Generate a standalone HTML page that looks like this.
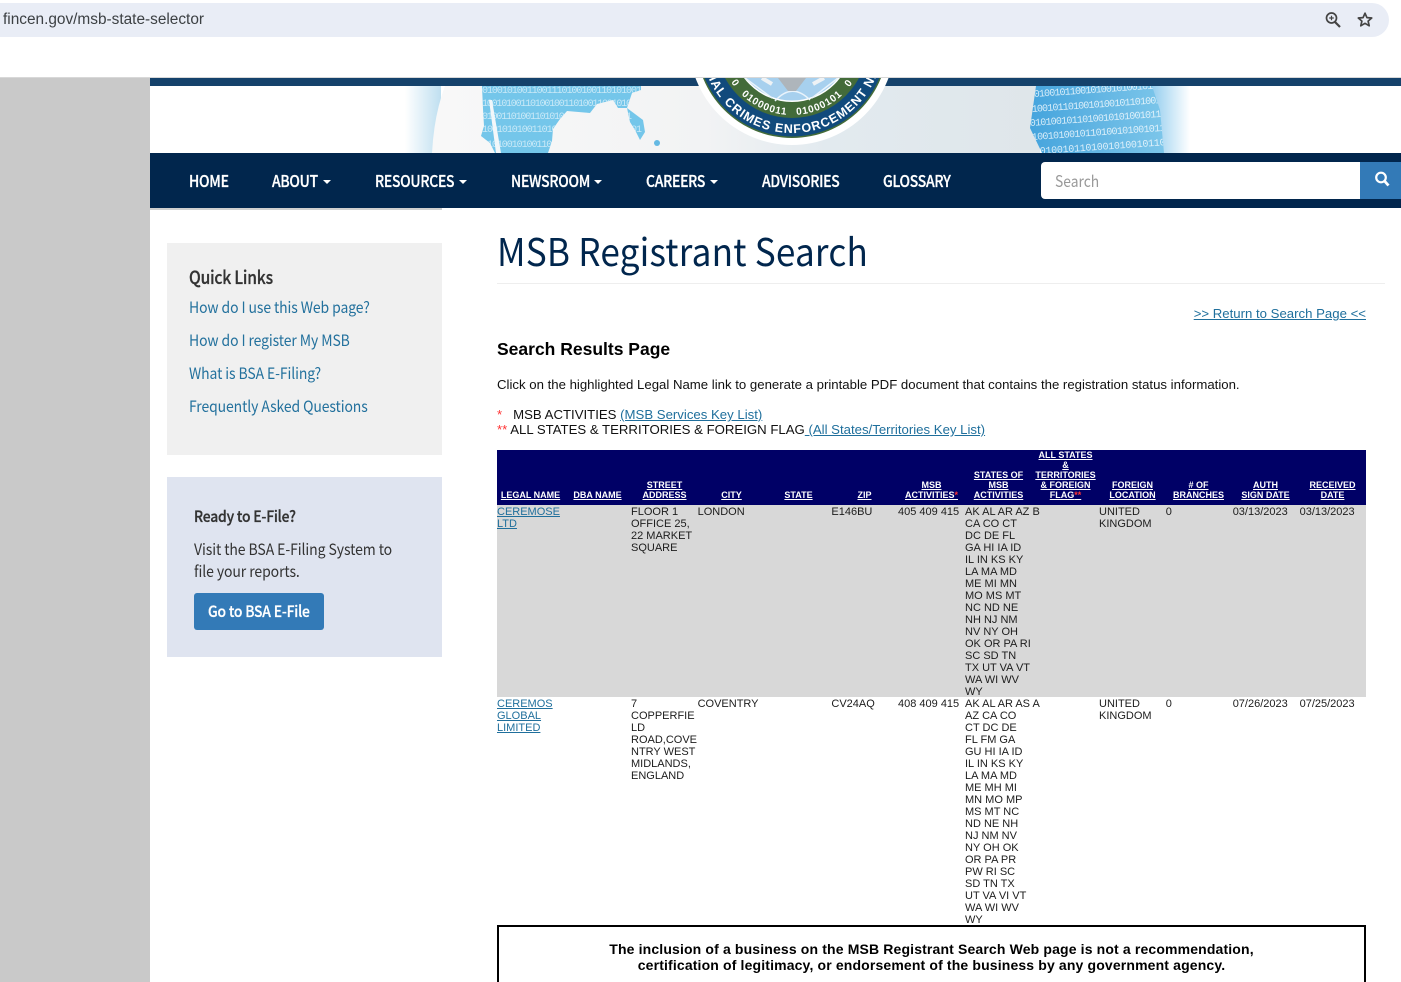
<!DOCTYPE html>
<html><head><meta charset="utf-8"><title>MSB Registrant Search</title>
<style>
html,body{margin:0;padding:0;background:#fff}
#p{position:relative;width:1401px;height:982px;overflow:hidden;background:#fff;font-family:"Liberation Sans",Arial,sans-serif}
.t,.c,.h{position:absolute;white-space:nowrap}
.s{font-family:"Noto Sans CJK JP","Liberation Sans",sans-serif;transform-origin:0 50%}
a{color:#1f6f9c;text-decoration:underline}
.n{top:169px;line-height:22px;color:#fff;font-size:16px;font-weight:500;letter-spacing:-.3px;transform:scaleX(.87);-webkit-text-stroke:.3px #fff}
.car{position:absolute;top:180px;width:0;height:0;border-left:4px solid transparent;border-right:4px solid transparent;border-top:4px solid #fff}
.ql{left:189px;line-height:22px;color:#23719d;font-size:15.5px;letter-spacing:-.1px;transform:scaleX(.9)}
.c{font-size:11px;line-height:12px;color:#1c1c1c}
.h{font-size:9px;line-height:10px;font-weight:bold;color:#fff;text-align:center;width:67px;text-decoration:underline;bottom:482px}
.h i{color:#f33;font-style:normal}
</style></head><body><div id="p">

<div style="position:absolute;left:0;top:3px;width:1389px;height:34px;background:#e9edf6;border-radius:0 17px 17px 0"></div>
<div class="t" style="left:3px;top:10px;line-height:20px;font-size:15.4px;color:#3c4043">fincen.gov/msb-state-selector</div>
<svg style="position:absolute;left:1324px;top:10px" width="52" height="20" viewBox="0 0 52 20" fill="none" stroke="#444"><circle cx="7.5" cy="8" r="5" stroke-width="1.7"/><path d="M11 12l5 5" stroke-width="2.2"/><path d="M5.2 8h4.6M7.5 5.7v4.6" stroke-width="1.2"/><path d="M41 3.2l1.9 4.4 4.8.4-3.6 3.1 1.1 4.7-4.2-2.5-4.2 2.5 1.1-4.7-3.6-3.1 4.8-.4z" stroke-width="1.7" stroke-linejoin="round"/></svg>

<div style="position:absolute;left:0;top:77px;width:1401px;height:1px;background:#d8d8d8"></div>
<div style="position:absolute;left:0;top:78px;width:150px;height:904px;background:#c9c9c9"></div>

<svg style="position:absolute;left:150px;top:78px" width="1251" height="75" viewBox="150 78 1251 75">
<defs>
<linearGradient id="gl" x1="0" x2="1" y1="0" y2="0"><stop offset="0" stop-color="#fff"/><stop offset="1" stop-color="#bfdff0"/></linearGradient>
<linearGradient id="gr" x1="0" x2="1" y1="0" y2="0"><stop offset="0" stop-color="#8fcbee"/><stop offset="1" stop-color="#fff"/></linearGradient>
<linearGradient id="mid" x1="0" x2="1" y1="0" y2="0"><stop offset="0" stop-color="#f8f8f8"/><stop offset=".45" stop-color="#f2f3f4"/><stop offset=".65" stop-color="#e2eaef"/><stop offset="1" stop-color="#dfe6ea"/></linearGradient>
<linearGradient id="blu" x1="0" x2="1" y1="0" y2="0"><stop offset="0" stop-color="#45a4dd"/><stop offset=".5" stop-color="#62b5e3"/><stop offset="1" stop-color="#7cc6ea"/></linearGradient>
<path id="a1" d="M701 42a91 91 0 0 0 182 0"/>
<path id="a2" d="M719 42a73 73 0 0 0 146 0"/>
<clipPath id="cl"><path d="M482 86L641 86L641 90L632 93L627 108L643 120L645 132L640 140L635 130L630 122L627 108L618 108L613 100L597 104L590 113L567 111L560 119L553 129L552 141L548 153L495 153L490 143L481 136L484 126L483 109Z"/></clipPath>
<clipPath id="cr"><path d="M1036 86L1152 86L1160 110L1164 153L1042 153L1030 128L1034 100Z"/></clipPath>
</defs>
<rect x="150" y="78" width="1251" height="8" fill="#15426b"/>
<rect x="405" y="86" width="36" height="67" fill="url(#gl)"/>
<path d="M445 86L1040 86L1040 153L432 153Q434 115 445 86Z" fill="url(#mid)"/>
<path d="M482 86L641 86L641 90L632 93L627 108L643 120L645 132L640 140L635 130L630 122L627 108L618 108L613 100L597 104L590 113L567 111L560 119L553 129L552 141L548 153L495 153L490 143L481 136L484 126L483 109Z" fill="#74c6ea"/>
<path d="M489 100L492 100L501 153L496 153Z" fill="#f4f7f9"/>
<circle cx="657" cy="143" r="3" fill="#64b9e3"/>
<g clip-path="url(#cl)" font-family="Liberation Mono" font-size="10" fill="#eaf7fd" opacity=".72">
<text x="482" y="93" textLength="160">01001010011001110100100110101001</text>
<text x="482" y="106" textLength="150">1001010011010010011010011001010</text>
<text x="482" y="119" textLength="150">0100110100110101001001101001011</text>
<text x="482" y="132" textLength="160">10010101001101001010010101100101</text>
<text x="482" y="147" textLength="100">01010010100110100101</text>
</g>
<rect x="1150" y="86" width="40" height="67" fill="url(#gr)"/>
<path d="M1036 86L1152 86L1160 110L1164 153L1042 153L1030 128L1034 100Z" fill="url(#blu)"/>
<g clip-path="url(#cr)" font-family="Liberation Mono" font-size="10" fill="#f2fafe" opacity=".85">
<text x="1034" y="97" textLength="130" transform="rotate(-4 1034 97)">0100101100101001010010110</text>
<text x="1032" y="112" textLength="130" transform="rotate(-4 1032 112)">1001011010010100101101001</text>
<text x="1030" y="126" textLength="132" transform="rotate(-4 1030 126)">0101001011010010101001011</text>
<text x="1032" y="140" textLength="134" transform="rotate(-4 1032 140)">1001010010110100101001011</text>
<text x="1040" y="154" textLength="126" transform="rotate(-4 1040 154)">0100101101001010010110</text>
</g>
<circle cx="792" cy="42" r="103" fill="#fff"/>
<circle cx="792" cy="42" r="96" fill="#436b39"/>
<circle cx="792" cy="42" r="94.500" fill="#114a7c"/>
<circle cx="792" cy="42" r="76" fill="#436b39"/>
<circle cx="792" cy="42" r="60" fill="#fff"/>
<circle cx="792" cy="42" r="58.500" fill="#a7d0ee"/>
<path d="M745 78L772 98M838 78L812 98M775 101Q792 82 810 100" stroke="#e9f3fb" stroke-width="1.500" fill="none"/>
<path d="M778 78L788 91L796 91L806 78Z" fill="#aeb5bb"/>
<path d="M762 78L772 84M824 78L813 84" stroke="#eef2f5" stroke-width="4"/>
<g font-family="Liberation Sans" font-size="12.500" font-weight="bold" fill="#fff" letter-spacing="1">
<text><textPath href="#a1" startOffset="61" text-anchor="end">FINANCIAL</textPath></text>
<text><textPath href="#a1" startOffset="65.800">CRIMES ENFORCEMENT NETWORK</textPath></text>
</g>
<text font-family="Liberation Sans" font-size="10" font-weight="bold" fill="#fff" letter-spacing=".85" word-spacing="6"><textPath href="#a2" startOffset="50%" text-anchor="middle">0 01000011 01000101 0</textPath></text>
</svg>

<div style="position:absolute;left:150px;top:153px;width:1251px;height:55px;background:#01264d"></div>
<div style="position:absolute;left:150px;top:208px;width:292px;height:2px;background:#cfcfcf"></div>
<div class="t n s" style="left:189px">HOME</div>
<div class="t n s" style="left:272px">ABOUT</div><div class="car" style="left:323px"></div>
<div class="t n s" style="left:375px">RESOURCES</div><div class="car" style="left:459px"></div>
<div class="t n s" style="left:511px">NEWSROOM</div><div class="car" style="left:594px"></div>
<div class="t n s" style="left:646px">CAREERS</div><div class="car" style="left:710px"></div>
<div class="t n s" style="left:762px">ADVISORIES</div>
<div class="t n s" style="left:883px">GLOSSARY</div>
<div style="position:absolute;left:1041px;top:162px;width:320px;height:37px;background:#fff;border-radius:4px 0 0 4px"></div>
<div class="t s" style="left:1055px;top:169px;line-height:22px;font-size:16px;color:#999;transform:scaleX(.865)">Search</div>
<div style="position:absolute;left:1360px;top:162px;width:41px;height:37px;background:#337ab7"></div>
<svg style="position:absolute;left:1373px;top:170px" width="18" height="18" viewBox="0 0 18 18" fill="none" stroke="#fff"><circle cx="8" cy="7.500" r="4.800" stroke-width="2.200"/><path d="M11.500 11l4 4.500" stroke-width="2.800"/></svg>

<div style="position:absolute;left:167px;top:243px;width:275px;height:212px;background:#f0f0f0"></div>
<div class="t s" style="left:189px;top:265px;line-height:24px;font-size:18px;font-weight:500;color:#333;letter-spacing:-.2px;transform:scaleX(.866);-webkit-text-stroke:.3px #333">Quick Links</div>
<div class="t ql s" style="top:296px">How do I use this Web page?</div>
<div class="t ql s" style="top:329px">How do I register My MSB</div>
<div class="t ql s" style="top:362px">What is BSA E-Filing?</div>
<div class="t ql s" style="top:395px">Frequently Asked Questions</div>

<div style="position:absolute;left:167px;top:477px;width:275px;height:180px;background:#dfe4f0"></div>
<div class="t s" style="left:194px;top:505px;line-height:22px;font-size:15.500px;font-weight:500;color:#333;letter-spacing:-.2px;transform:scaleX(.895);-webkit-text-stroke:.3px #333">Ready to E-File?</div>
<div class="t s" style="left:194px;top:538px;line-height:22px;font-size:15.500px;color:#333;letter-spacing:-.1px;transform:scaleX(.904)">Visit the BSA E-Filing System to<br>file your reports.</div>
<div style="position:absolute;left:194px;top:593px;width:130px;height:37px;background:#337ab7;border-radius:3px"></div>
<div class="t s" style="left:208px;top:600px;line-height:22px;font-size:15.500px;font-weight:500;color:#fff;letter-spacing:-.2px;transform:scaleX(.895);-webkit-text-stroke:.25px #fff">Go to BSA E-File</div>

<div class="t s" style="left:497px;top:222px;line-height:56px;font-size:38px;color:#01264d;letter-spacing:.2px;transform:scaleX(.925)">MSB Registrant Search</div>
<div style="position:absolute;left:497px;top:283px;width:888px;height:1px;background:#eee"></div>
<div class="t" style="right:35px;top:306px;line-height:15px;font-size:13.200px"><a>&gt;&gt; Return to Search Page &lt;&lt;</a></div>
<div class="t" style="left:497px;top:338px;line-height:22px;font-size:17.500px;font-weight:bold;color:#000">Search Results Page</div>
<div class="t" style="left:497px;top:377px;line-height:15px;font-size:13.200px;color:#111">Click on the highlighted Legal Name link to generate a printable PDF document that contains the registration status information.</div>
<div class="t" style="left:497px;top:407px;line-height:15px;font-size:13.200px;color:#111"><span style="color:#f33">*</span><span style="margin-left:11px">MSB ACTIVITIES</span> <a>(MSB Services Key List)</a></div>
<div class="t" style="left:497px;top:422px;line-height:15px;font-size:13.200px;color:#111"><span style="color:#f33">**</span> ALL STATES &amp; TERRITORIES &amp; FOREIGN FLAG<a> (All States/Territories Key List)</a></div>

<div style="position:absolute;left:497px;top:450px;width:869px;height:55px;background:#006"></div>
<div style="position:absolute;left:497px;top:505px;width:869px;height:192px;background:#d8d8d8"></div>

<div class="h" style="left:497px">LEGAL NAME</div>
<div class="h" style="left:564px">DBA NAME</div>
<div class="h" style="left:631px">STREET<br>ADDRESS</div>
<div class="h" style="left:698px">CITY</div>
<div class="h" style="left:765px">STATE</div>
<div class="h" style="left:831px">ZIP</div>
<div class="h" style="left:898px">MSB<br>ACTIVITIES<i>*</i></div>
<div class="h" style="left:965px">STATES OF<br>MSB<br>ACTIVITIES</div>
<div class="h" style="left:1032px">ALL STATES<br>&amp;<br>TERRITORIES<br>&amp; FOREIGN<br>FLAG<i>**</i></div>
<div class="h" style="left:1099px">FOREIGN<br>LOCATION</div>
<div class="h" style="left:1165px">#&nbsp;OF<br>BRANCHES</div>
<div class="h" style="left:1232px">AUTH<br>SIGN DATE</div>
<div class="h" style="left:1299px">RECEIVED<br>DATE</div>

<div class="c" style="left:497px;top:506px"><a>CEREMOSE<br>LTD</a></div>
<div class="c" style="left:631px;top:506px">FLOOR 1<br>OFFICE 25,<br>22 MARKET<br>SQUARE</div>
<div class="c" style="left:697.600px;top:506px">LONDON</div>
<div class="c" style="left:831.400px;top:506px">E146BU</div>
<div class="c" style="left:898px;top:506px">405 409 415</div>
<div class="c" style="left:965px;top:506px">AK AL AR AZ B<br>CA CO CT<br>DC DE FL<br>GA HI IA ID<br>IL IN KS KY<br>LA MA MD<br>ME MI MN<br>MO MS MT<br>NC ND NE<br>NH NJ NM<br>NV NY OH<br>OK OR PA RI<br>SC SD TN<br>TX UT VA VT<br>WA WI WV<br>WY</div>
<div class="c" style="left:1099px;top:506px">UNITED<br>KINGDOM</div>
<div class="c" style="left:1165.800px;top:506px">0</div>
<div class="c" style="left:1232.700px;top:506px">03/13/2023</div>
<div class="c" style="left:1299.600px;top:506px">03/13/2023</div>

<div class="c" style="left:497px;top:698px"><a>CEREMOS<br>GLOBAL<br>LIMITED</a></div>
<div class="c" style="left:631px;top:698px">7<br>COPPERFIE<br>LD<br>ROAD,COVE<br>NTRY WEST<br>MIDLANDS,<br>ENGLAND</div>
<div class="c" style="left:697.600px;top:698px">COVENTRY</div>
<div class="c" style="left:831.400px;top:698px">CV24AQ</div>
<div class="c" style="left:898px;top:698px">408 409 415</div>
<div class="c" style="left:965px;top:698px">AK AL AR AS A<br>AZ CA CO<br>CT DC DE<br>FL FM GA<br>GU HI IA ID<br>IL IN KS KY<br>LA MA MD<br>ME MH MI<br>MN MO MP<br>MS MT NC<br>ND NE NH<br>NJ NM NV<br>NY OH OK<br>OR PA PR<br>PW RI SC<br>SD TN TX<br>UT VA VI VT<br>WA WI WV<br>WY</div>
<div class="c" style="left:1099px;top:698px">UNITED<br>KINGDOM</div>
<div class="c" style="left:1165.800px;top:698px">0</div>
<div class="c" style="left:1232.700px;top:698px">07/26/2023</div>
<div class="c" style="left:1299.600px;top:698px">07/25/2023</div>

<div style="position:absolute;left:497px;top:925px;width:865px;height:70px;border:2px solid #000"></div>
<div class="t" style="left:497px;width:869px;top:941px;text-align:center;line-height:16px;font-size:14px;font-weight:bold;color:#000;letter-spacing:.145px">The inclusion of a business on the MSB Registrant Search Web page is not a recommendation,<br>certification of legitimacy, or endorsement of the business by any government agency.</div>

</div></body></html>
